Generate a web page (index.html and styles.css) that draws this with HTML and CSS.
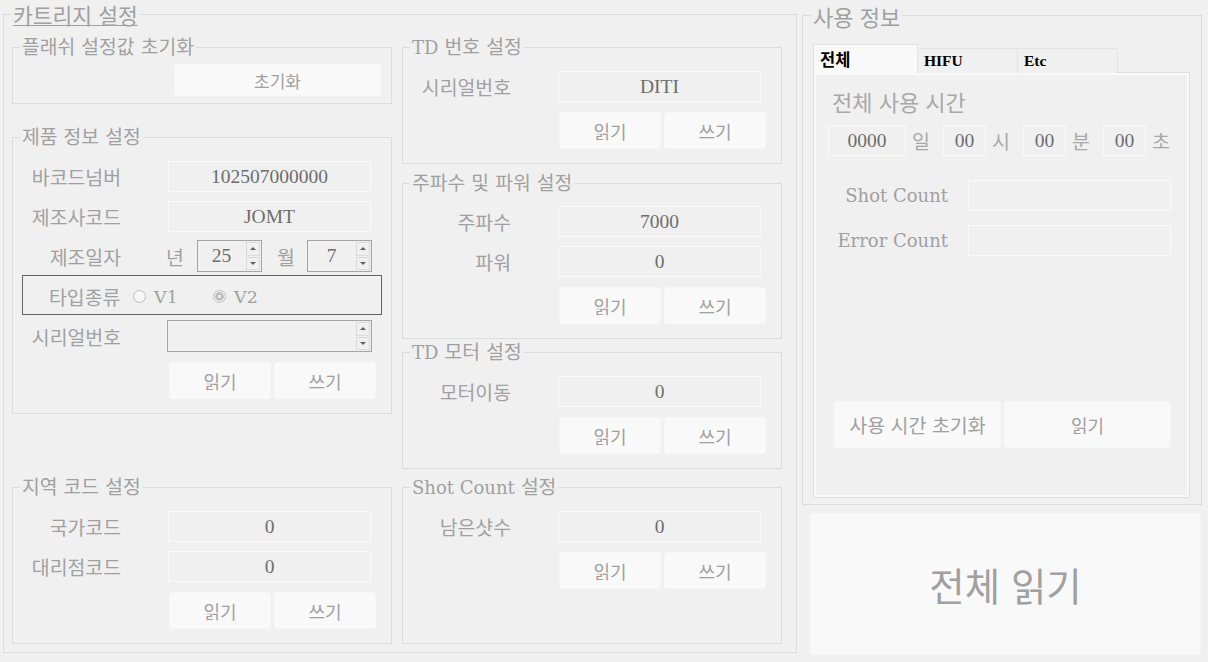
FILE: index.html
```html
<!DOCTYPE html>
<html lang="ko">
<head>
<meta charset="utf-8">
<title>카트리지 설정</title>
<link rel="stylesheet" href="styles.css">
</head>
<body>
<div class="app">
  <section class="group cart">
    <div class="legend legend-big underline">카트리지 설정</div>
    <div class="cols">
      <div class="col">
        <div class="group g-flash">
          <div class="legend">플래쉬 설정값 초기화</div>
          <button class="btn btn-reset">초기화</button>
        </div>

        <div class="group g-product">
          <div class="legend">제품 정보 설정</div>
          <div class="row first">
            <span class="lbl">바코드넘버</span>
            <div class="tb">102507000000</div>
          </div>
          <div class="row mt9">
            <span class="lbl">제조사코드</span>
            <div class="tb">JOMT</div>
          </div>
          <div class="row row-date mt8">
            <span class="lbl">제조일자</span>
            <span class="unit-y">년</span>
            <div class="num num-small">
              <div class="num-val">25</div>
              <div class="spin"><div class="spin-btn"><i class="tri-up"></i></div><div class="spin-btn"><i class="tri-down"></i></div></div>
            </div>
            <span class="unit-m">월</span>
            <div class="num num-small num-m">
              <div class="num-val">7</div>
              <div class="spin"><div class="spin-btn"><i class="tri-up"></i></div><div class="spin-btn"><i class="tri-down"></i></div></div>
            </div>
          </div>
          <div class="typebox">
            <span class="type-lbl">타입종류</span>
            <span class="opt"><i class="radio"></i><span>V1</span></span>
            <span class="opt"><i class="radio on"></i><span>V2</span></span>
          </div>
          <div class="row row-date mt5">
            <span class="lbl">시리얼번호</span>
            <div class="num num-wide">
              <div class="num-val"></div>
              <div class="spin"><div class="spin-btn"><i class="tri-up"></i></div><div class="spin-btn"><i class="tri-down"></i></div></div>
            </div>
          </div>
          <div class="btns"><button class="btn">읽기</button><button class="btn">쓰기</button></div>
        </div>

        <div class="group g-region">
          <div class="legend">지역 코드 설정</div>
          <div class="row first">
            <span class="lbl">국가코드</span>
            <div class="tb">0</div>
          </div>
          <div class="row mt9">
            <span class="lbl">대리점코드</span>
            <div class="tb">0</div>
          </div>
          <div class="btns"><button class="btn">읽기</button><button class="btn">쓰기</button></div>
        </div>
      </div>

      <div class="col">
        <div class="group g-tdnum">
          <div class="legend"><span class="lat">TD</span> 번호 설정</div>
          <div class="row first">
            <span class="lbl">시리얼번호</span>
            <div class="tb">DITI</div>
          </div>
          <div class="btns"><button class="btn">읽기</button><button class="btn">쓰기</button></div>
        </div>

        <div class="group g-freq">
          <div class="legend">주파수 및 파워 설정</div>
          <div class="row first13">
            <span class="lbl">주파수</span>
            <div class="tb">7000</div>
          </div>
          <div class="row mt9">
            <span class="lbl">파워</span>
            <div class="tb">0</div>
          </div>
          <div class="btns"><button class="btn">읽기</button><button class="btn">쓰기</button></div>
        </div>

        <div class="group g-motor">
          <div class="legend"><span class="lat">TD</span> 모터 설정</div>
          <div class="row first">
            <span class="lbl">모터이동</span>
            <div class="tb">0</div>
          </div>
          <div class="btns"><button class="btn">읽기</button><button class="btn">쓰기</button></div>
        </div>

        <div class="group g-shot">
          <div class="legend"><span class="lat">Shot Count</span> 설정</div>
          <div class="row first">
            <span class="lbl">남은샷수</span>
            <div class="tb">0</div>
          </div>
          <div class="btns"><button class="btn">읽기</button><button class="btn">쓰기</button></div>
        </div>
      </div>
    </div>
  </section>

  <div class="right">
    <section class="group usage">
      <div class="legend legend-big legend-usage">사용 정보</div>
      <div class="tabs">
        <div class="tab active">전체</div>
        <div class="tab">HIFU</div>
        <div class="tab">Etc</div>
      </div>
      <div class="page">
        <div class="pane">
          <div class="pane-title">전체 사용 시간</div>
          <div class="time-row">
            <div class="tb tb-days">0000</div><span class="unit">일</span>
            <div class="tb tb-2">00</div><span class="unit">시</span>
            <div class="tb tb-2">00</div><span class="unit">분</span>
            <div class="tb tb-2">00</div><span class="unit">초</span>
          </div>
          <div class="count-row count-first">
            <span class="count-lbl">Shot Count</span>
            <div class="tb tb-count"></div>
          </div>
          <div class="count-row count-second">
            <span class="count-lbl">Error Count</span>
            <div class="tb tb-count"></div>
          </div>
          <div class="pane-btns">
            <button class="btn btn-pane btn-reset-time">사용 시간 초기화</button>
            <button class="btn btn-pane">읽기</button>
          </div>
        </div>
      </div>
    </section>
    <button class="btn btn-big">전체 읽기</button>
  </div>
</div>
</body>
</html>
```

FILE: styles.css
```css
* { box-sizing: border-box; }

html, body {
  margin: 0;
  padding: 0;
  background: #f0f0f0;
}

body {
  width: 1208px;
  height: 662px;
  overflow: hidden;
  font-family: "DejaVu Serif", "Noto Sans CJK KR", serif;
  color: #a0a0a0;
}

.app {
  display: flex;
  align-items: flex-start;
}

/* group boxes */
.group {
  border: 1px solid #dcdcdc;
}

.legend {
  width: fit-content;
  margin: -10px 0 0 7px;
  padding: 0 2px;
  height: 20px;
  line-height: 20px;
  font-size: 19.3px;
  background: #f0f0f0;
  white-space: nowrap;
}

.legend + * { margin-top: 13px; }

.lat { font-size: 18px; }

.legend-big {
  margin: -12px 0 0 7px;
  height: 24px;
  line-height: 24px;
  font-size: 21.5px;
  font-family: "Noto Sans CJK KR", sans-serif;
}

.legend-usage { margin-left: 8px; font-size: 22px; }

.underline {
  text-decoration: underline;
  text-decoration-thickness: 1px;
  text-underline-offset: 1px;
}

.cart {
  margin: 14px 0 0 3px;
  width: 794px;
  height: 639px;
}

.cols {
  display: flex;
  gap: 10px;
  margin: 20px 0 0 8px;
}

.col {
  width: 380px;
  display: flex;
  flex-direction: column;
}

.g-flash { height: 57px; }
.g-product { height: 277px; margin-top: 33px; }
.g-region { height: 157px; margin-top: 73px; }
.g-tdnum { height: 117px; }
.g-freq { height: 156px; margin-top: 19px; }
.g-motor { height: 117px; margin-top: 13px; }
.g-shot { height: 157px; margin-top: 18px; }

/* rows */
.row {
  display: flex;
  align-items: center;
  height: 31px;
}

.legend + .first { margin-top: 13px; }
.legend + .first13 { margin-top: 12px; }
.mt9 { margin-top: 9px; }
.mt8 { margin-top: 8px; }
.mt5 { margin-top: 5px; }

.lbl {
  flex: none;
  width: 108px;
  text-align: right;
  font-size: 19.4px;
  white-space: nowrap;
}

.tb {
  flex: none;
  margin-left: 47px;
  width: 203px;
  height: 31px;
  border: 1px solid #fafafa;
  background: #f0f0f0;
  display: flex;
  align-items: center;
  justify-content: center;
  font-family: "Liberation Serif", "Noto Sans CJK KR", serif;
  font-size: 19.5px;
  color: #6d6d6d;
}

/* buttons */
.btn {
  display: flex;
  align-items: center;
  justify-content: center;
  margin: 0;
  padding: 0;
  border: 1px solid #f6f6f6;
  border-radius: 3px;
  background: #f9f9f9;
  color: #a0a0a0;
  font-family: "Noto Sans CJK KR", sans-serif;
  font-size: 18px;
  cursor: default;
}

.btns {
  display: flex;
  gap: 3px;
  margin: 10px 0 0 156px;
}

.btns .btn {
  width: 102px;
  height: 37px;
}

.legend + .btn-reset {
  width: 207px;
  height: 32px;
  margin: 6px 0 0 161px;
  font-size: 17px;
}

/* date / numeric */
.row-date { height: 32px; }

.unit-y {
  margin-left: 45px;
  width: 20px;
  font-size: 19.4px;
}

.unit-m {
  margin-left: 15px;
  width: 20px;
  font-size: 19.4px;
}

.num {
  flex: none;
  display: flex;
  height: 32px;
  border: 1px solid #a4a4a4;
  background: #f0f0f0;
}

.num-small { width: 65px; margin-left: 11px; }
.num-m { margin-left: 10px; }
.num-wide { width: 205px; margin-left: 46px; }

.num-val {
  flex: 1;
  display: flex;
  align-items: center;
  justify-content: center;
  font-family: "Liberation Serif", serif;
  font-size: 19.5px;
  color: #6d6d6d;
}

.spin {
  width: 16px;
  display: flex;
  flex-direction: column;
  gap: 1px;
  padding: 1px;
}

.spin-btn {
  flex: 1;
  border: 1px solid #dadada;
  background: #f0f0f0;
  display: flex;
  align-items: center;
  justify-content: center;
}

.tri-up {
  width: 0;
  height: 0;
  border-left: 3px solid transparent;
  border-right: 3px solid transparent;
  border-bottom: 3px solid #606060;
}

.tri-down {
  width: 0;
  height: 0;
  border-left: 3px solid transparent;
  border-right: 3px solid transparent;
  border-top: 3px solid #606060;
}

/* type box */
.typebox {
  margin: 3px 0 0 9px;
  width: 360px;
  height: 40px;
  border: 1px solid #646464;
  display: flex;
  align-items: center;
  padding: 3px 0 0 26px;
}

.type-lbl {
  width: 84px;
  font-size: 19.4px;
}

.opt {
  display: flex;
  align-items: center;
  gap: 8px;
  width: 80px;
  font-size: 17.5px;
}

.radio {
  display: block;
  width: 13px;
  height: 13px;
  border-radius: 50%;
  border: 1px solid #bcbcbc;
  background: #f6f6f6;
}

.radio.on {
  background: radial-gradient(circle, #ececec 0 1.3px, #bdbdbd 2px 4px, #f4f4f4 4.6px);
}

/* right column */
.right {
  margin-left: 5px;
  width: 400px;
  display: flex;
  flex-direction: column;
}

.usage {
  margin-top: 15px;
  height: 490px;
}

.legend-big + .tabs,
.tabs {
  display: flex;
  align-items: flex-end;
  margin: 16px 0 0 10px;
  height: 29px;
  position: relative;
  z-index: 1;
}

.tab {
  width: 101px;
  height: 25px;
  margin-left: -1px;
  border: 1px solid #e3e3e3;
  border-bottom: none;
  background: #f0f0f0;
  display: flex;
  align-items: center;
  padding-left: 6px;
  color: #000;
  font-family: "Liberation Serif", "Noto Sans CJK KR", serif;
  font-weight: bold;
  font-size: 15.5px;
}

.tab.active {
  width: 105px;
  height: 29px;
  margin-left: 0;
  background: #f9f9f9;
  padding-left: 6px;
  font-size: 16.5px;
}

.page {
  margin: -1px 0 0 10px;
  width: 377px;
  height: 426px;
  border: 1px solid #dfdfdf;
  padding: 2px;
  background: #f9f9f9;
}

.pane {
  height: 100%;
  background: #f0f0f0;
  overflow: hidden;
}

.pane-title {
  margin-top: 14px;
  padding-left: 16px;
  height: 24px;
  line-height: 24px;
  font-family: "Noto Sans CJK KR", sans-serif;
  font-size: 22px;
  color: #a8a8a8;
}

.time-row {
  display: flex;
  align-items: center;
  margin-top: 12px;
  padding-left: 12px;
  height: 31px;
}

.time-row .tb { margin-left: 0; }
.time-row .tb-days { width: 78px; }
.time-row .tb-2 { width: 43px; }

.unit {
  width: 37px;
  padding-left: 6px;
  font-family: "Noto Sans CJK KR", sans-serif;
  font-size: 19.5px;
  color: #a8a8a8;
}

.count-row {
  display: flex;
  align-items: center;
  height: 31px;
}

.count-first { margin-top: 24px; }
.count-second { margin-top: 14px; }

.count-lbl {
  width: 132px;
  text-align: right;
  font-size: 18px;
  white-space: nowrap;
}

.count-row .tb-count {
  margin-left: 20px;
}

.pane-btns {
  display: flex;
  gap: 3px;
  margin: 145px 0 0 18px;
}

.btn-pane {
  width: 167px;
  height: 47px;
}

.btn-reset-time {
  font-size: 19.5px;
}

.btn-big {
  margin: 8px 0 0 8px;
  width: 391px;
  height: 142px;
  font-size: 38.5px;
}
```
